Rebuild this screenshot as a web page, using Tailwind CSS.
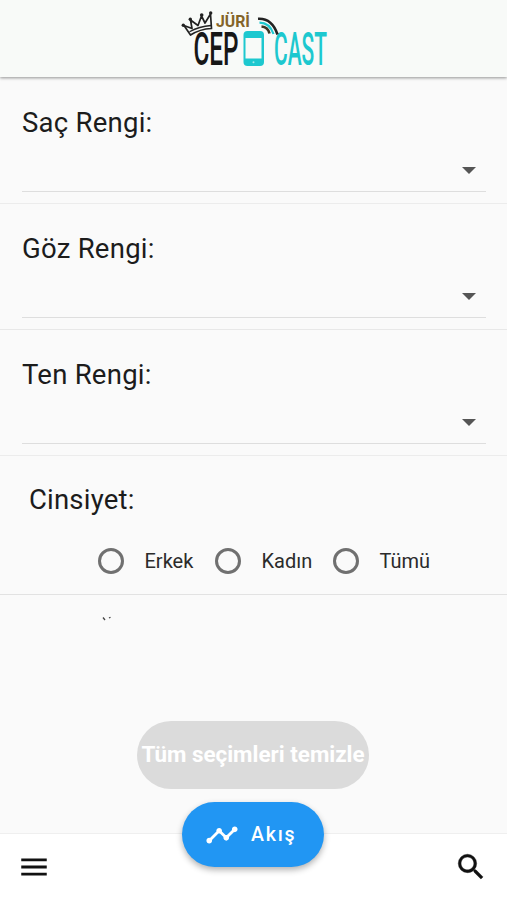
<!DOCTYPE html>
<html lang="tr">
<head>
<meta charset="utf-8">
<title>Jüri CepCast</title>
<script src="https://cdn.jsdelivr.net/npm/@tailwindcss/browser@4"></script>
</head>
<body class="bg-[#fafafa]">
<div class="relative flex h-[900px] w-[507px] flex-col overflow-hidden bg-[#fafafa] font-[Roboto,sans-serif] text-[#1c1c1c]">
  <header class="z-10 flex h-[77px] shrink-0 justify-center bg-[#f8faf8] shadow-[0_1px_3px_rgba(0,0,0,0.42)]">
    <svg class="h-[77px] w-[160px]" viewBox="174 0 160 77" role="img" aria-label="Jüri Cep Cast">
      <g fill="none" stroke="#222" stroke-width="1.7" stroke-linejoin="round" stroke-linecap="round">
        <path d="M190.500 35 184 25.500 192 28.500 190.500 20 198 25.500 201.500 16 205 23 210.500 14 211.500 28.500Q200 29 190.500 35Z"/>
        <path d="M190 31.500Q199 26.500 211 25.500" stroke-width="1.400"/>
      </g>
      <g fill="#222"><circle cx="183.300" cy="25.300" r="1.700"/><circle cx="190.300" cy="19.300" r="1.700"/><circle cx="201.700" cy="15" r="1.800"/><circle cx="210.700" cy="13" r="1.700"/></g>
      <text x="216" y="27" textLength="34" lengthAdjust="spacingAndGlyphs" font-family="Roboto" font-weight="700" font-size="16" fill="#846429">JÜRİ</text>
      <g font-family="Roboto" font-size="46" font-weight="500">
        <text x="193.500" y="65" textLength="45" lengthAdjust="spacingAndGlyphs" fill="#171717">CEP</text>
        <text x="274" y="65" textLength="53" lengthAdjust="spacingAndGlyphs" fill="#1dc8cf">CAST</text>
      </g>
      <rect x="243.500" y="31" width="20.500" height="35" rx="4" fill="#1dc8cf"/>
      <rect x="245.500" y="38" width="16" height="20.500" fill="#f8faf8"/>
      <circle cx="253.500" cy="62.200" r="1" fill="#a5e8ea"/>
      <g fill="none">
        <path d="M258 18.800Q272 18 277.500 34.500" stroke="#222" stroke-width="2.600"/>
        <path d="M259.500 22.600Q269.500 22.500 273.500 34" stroke="#1dc8cf" stroke-width="2.200"/>
        <path d="M261.500 26.500Q268 27 269.500 33.500" stroke="#3b3524" stroke-width="2.600"/>
      </g>
    </svg>
  </header>

  <main class="flex flex-1 flex-col">
    <section class="h-[127px] border-b border-[#ececec] pl-[22px] pr-[21px] pt-[30px]">
      <h2 class="text-[27.5px] leading-8 tracking-[0.25px]">Saç Rengi:</h2>
      <div class="flex h-[53px] items-center justify-end border-b border-[#dedede] pr-[10px] pt-[11px]">
        <svg class="h-[7px] w-[14px]" viewBox="0 0 14 7"><path d="M0 0H14L7 7Z" fill="#555"/></svg>
      </div>
    </section>
    <section class="h-[126px] border-b border-[#e8e8e8] pl-[22px] pr-[21px] pt-[29px]">
      <h2 class="text-[27.5px] leading-8 tracking-[0.25px]">Göz Rengi:</h2>
      <div class="flex h-[53px] items-center justify-end border-b border-[#dedede] pr-[10px] pt-[11px]">
        <svg class="h-[7px] w-[14px]" viewBox="0 0 14 7"><path d="M0 0H14L7 7Z" fill="#555"/></svg>
      </div>
    </section>
    <section class="h-[126px] border-b border-[#ececec] pl-[22px] pr-[21px] pt-[29px]">
      <h2 class="text-[27.5px] leading-8 tracking-[0.25px]">Ten Rengi:</h2>
      <div class="flex h-[53px] items-center justify-end border-b border-[#dedede] pr-[10px] pt-[11px]">
        <svg class="h-[7px] w-[14px]" viewBox="0 0 14 7"><path d="M0 0H14L7 7Z" fill="#555"/></svg>
      </div>
    </section>
    <section class="h-[139px] border-b border-[#e2e2e2] pt-[28px]">
      <h2 class="pl-[29px] text-[27.5px] leading-8 tracking-[0.2px]">Cinsiyet:</h2>
      <div class="mt-[31px] flex h-[28px] items-center pl-[98px] text-[20px] text-[#2b2b2b]">
        <div class="flex w-[117px] items-center gap-[20.5px]"><span class="size-[26px] rounded-full border-3 border-[#707070]"></span><span>Erkek</span></div>
        <div class="flex w-[118px] items-center gap-[20.5px]"><span class="size-[26px] rounded-full border-3 border-[#707070]"></span><span>Kadın</span></div>
        <div class="flex items-center gap-[20.5px]"><span class="size-[26px] rounded-full border-3 border-[#707070]"></span><span>Tümü</span></div>
      </div>
    </section>
    <svg class="ml-[102px] mt-[21px] h-[6px] w-[10px]" viewBox="0 0 10 6"><path d="M1 1.500 3 4M7 2 8.500 1.200" stroke="#444" stroke-width="1.300"/></svg>
    <button class="ml-[137px] mt-[99px] flex h-[68px] w-[232px] items-center justify-center whitespace-nowrap rounded-full bg-[#dbdbdb] text-[22.4px] font-bold text-white">Tüm seçimleri temizle</button>
  </main>

  <footer class="flex h-[67px] shrink-0 items-center justify-between border-t border-[#efefef] bg-white pl-[17px] pr-[19px]">
    <svg class="h-[34px] w-[34px]" viewBox="0 0 24 24" fill="#111"><path d="M3 18h18v-2H3v2zm0-5h18v-2H3v2zm0-7v2h18V6H3z"/></svg>
    <svg class="h-[34px] w-[34px]" viewBox="0 0 24 24" fill="#111" stroke="#111" stroke-width=".3"><path d="M15.500 14h-.79l-.28-.27A6.471 6.471 0 0 0 16 9.500 6.500 6.500 0 1 0 9.500 16c1.610 0 3.090-.59 4.230-1.570l.27.28v.79l5 4.990L20.490 19l-4.990-5zm-6 0C7.010 14 5 11.990 5 9.500S7.010 5 9.500 5 14 7.010 14 9.500 11.990 14 9.500 14z"/></svg>
  </footer>

  <button class="absolute left-[182px] top-[802px] z-20 flex h-[65px] w-[142px] items-center gap-[12px] rounded-full bg-[#2196f3] pl-[23px] text-white shadow-[0_3px_6px_rgba(0,0,0,0.3)]">
    <svg class="h-[34px] w-[34px]" viewBox="0 0 24 24" fill="currentColor"><path d="M23 8c0 1.100-.9 2-2 2-.18 0-.35-.02-.51-.07l-3.560 3.550c.05.16.07.34.07.52 0 1.100-.9 2-2 2s-2-.9-2-2c0-.18.02-.36.07-.52l-2.550-2.550c-.16.05-.34.07-.52.07s-.36-.02-.52-.07l-4.550 4.560c.05.16.07.33.07.51 0 1.100-.9 2-2 2s-2-.9-2-2 .9-2 2-2c.18 0 .35.02.51.07l4.560-4.550C8.020 9.360 8 9.180 8 9c0-1.100.9-2 2-2s2 .9 2 2c0 .18-.02.36-.07.52l2.550 2.550c.16-.05.34-.07.52-.07s.36.02.52.07l3.550-3.560C19.020 8.350 19 8.180 19 8c0-1.100.9-2 2-2s2 .9 2 2z"/></svg>
    <span class="text-[19.5px] font-medium tracking-[1.8px]">Akış</span>
  </button>
</div>
</body>
</html>
